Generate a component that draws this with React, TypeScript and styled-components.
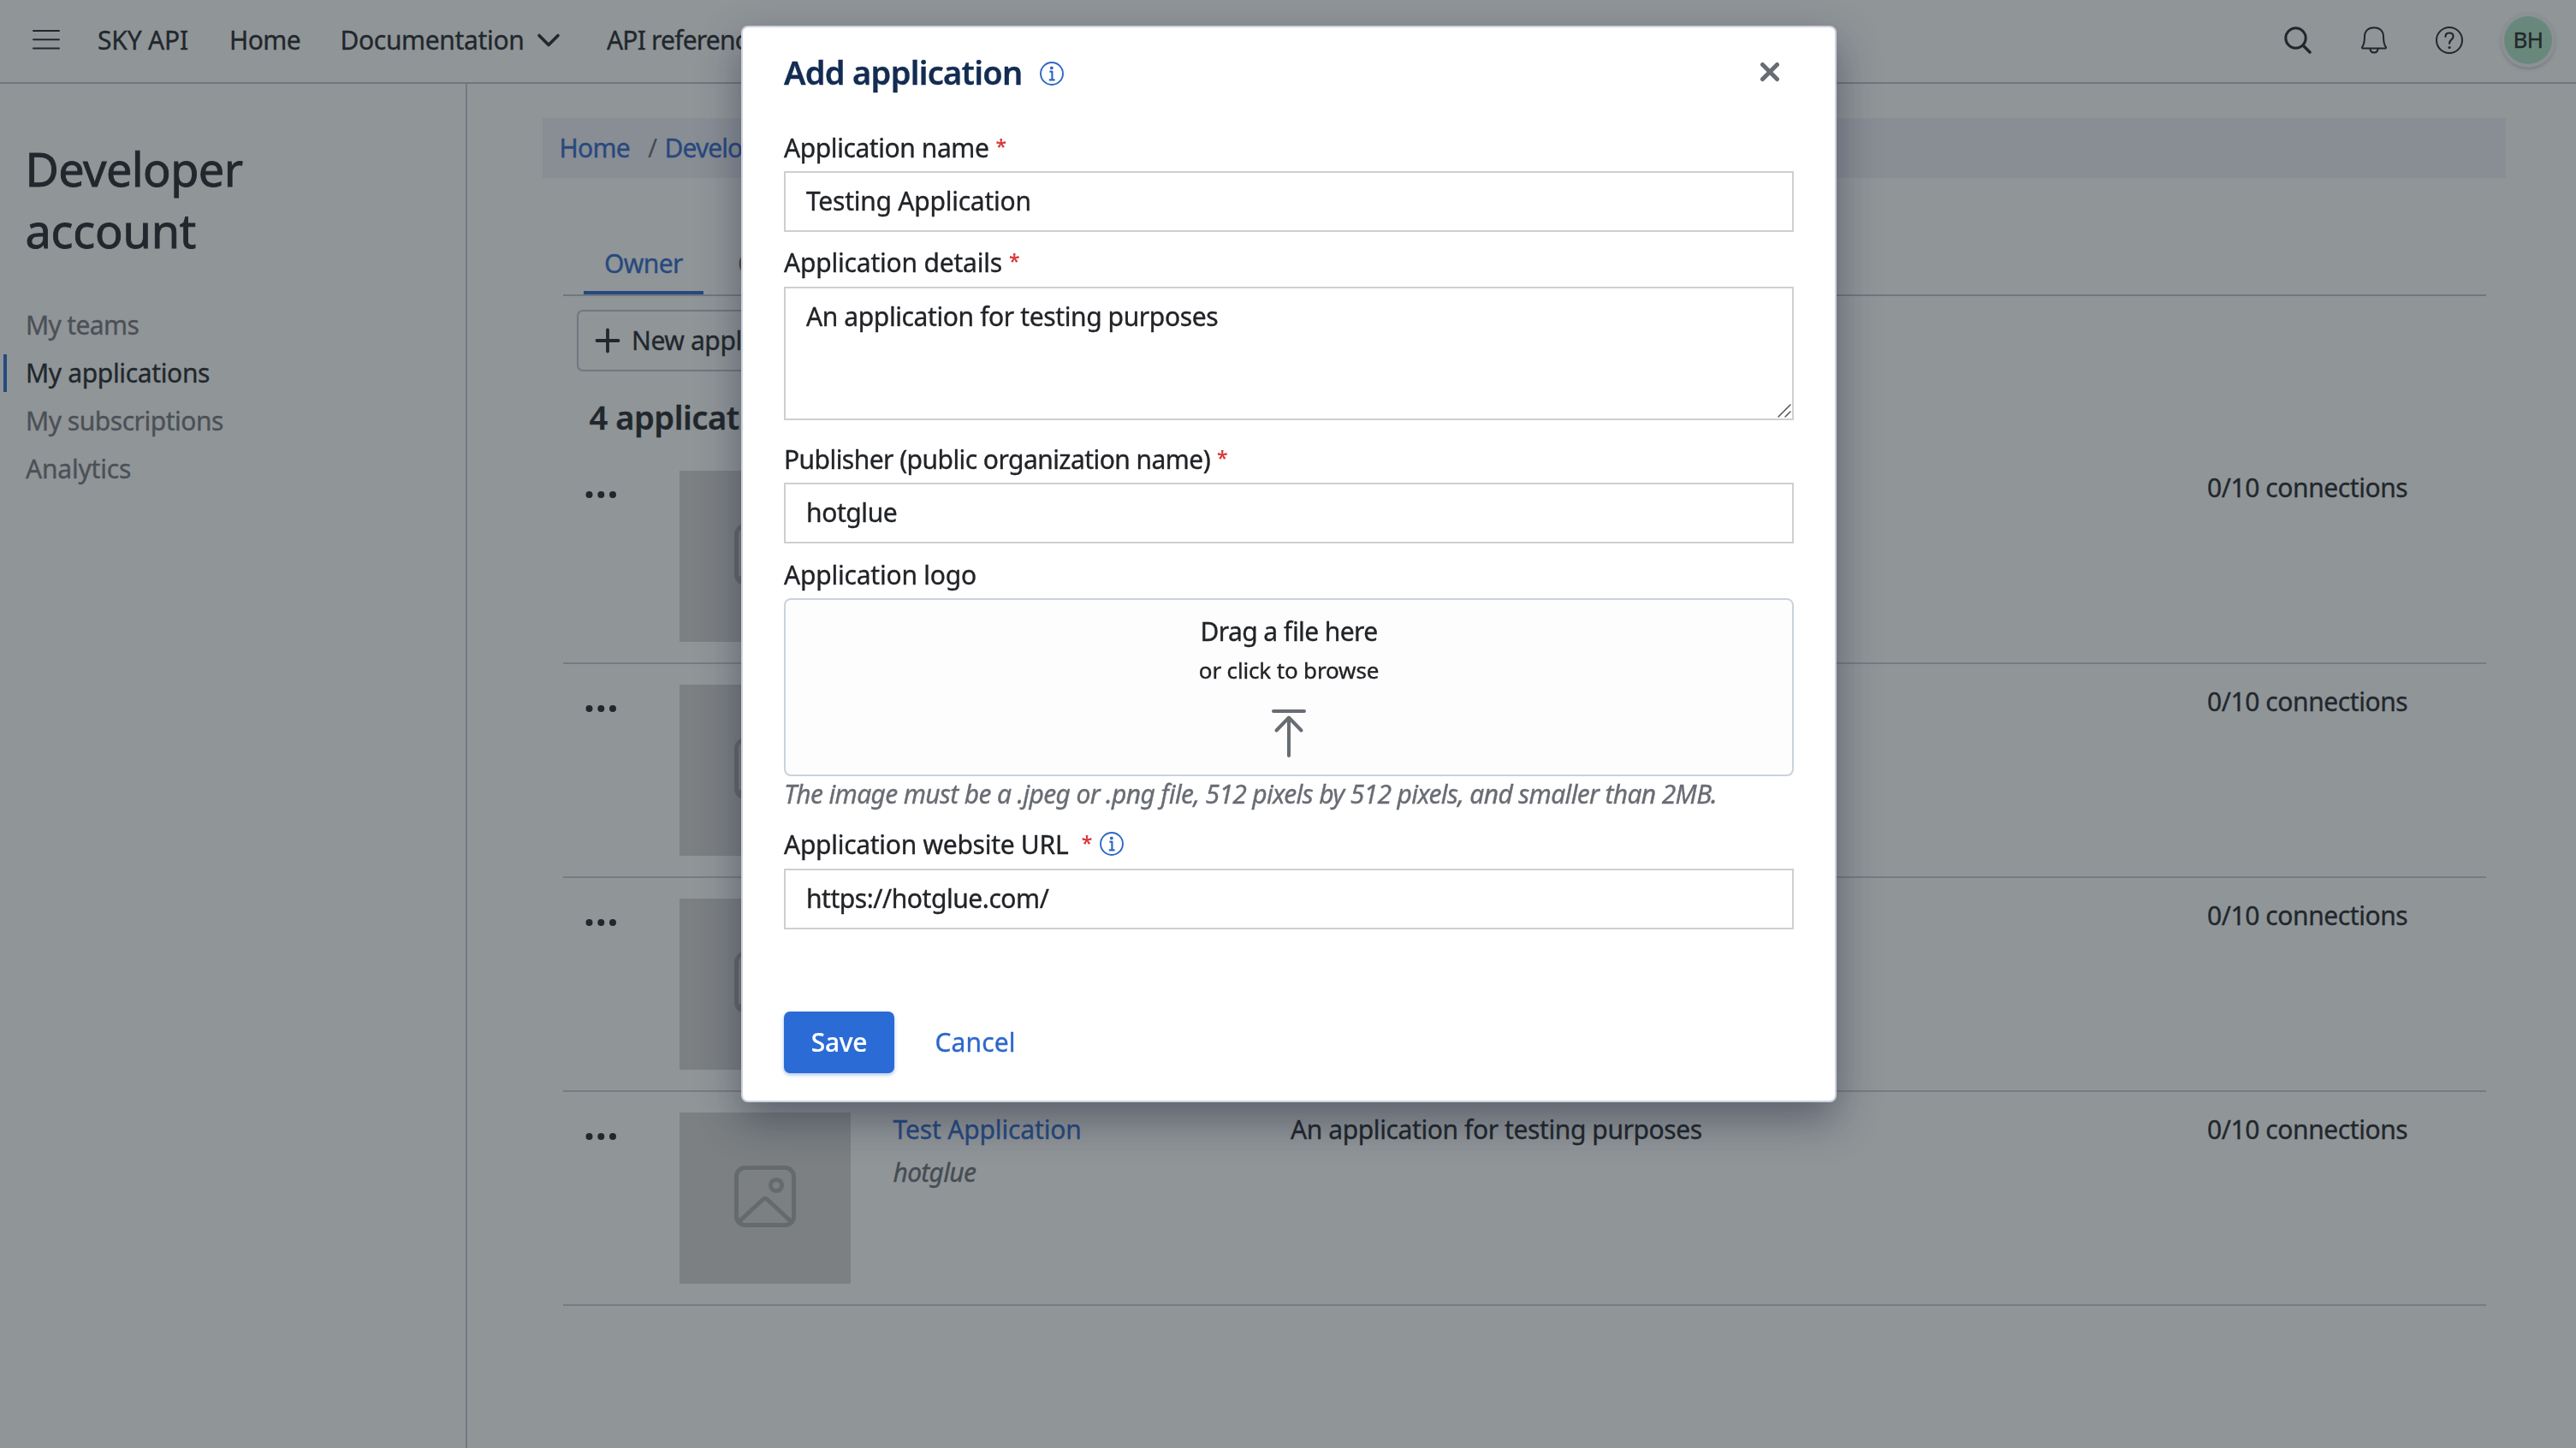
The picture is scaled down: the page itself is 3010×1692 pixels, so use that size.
import React from "react";
import styled, { createGlobalStyle } from "styled-components";

const INK = "#212327";
const MUTED = "#686c73";
const LINK = "#2d67cb";
const RULE = "#cdcfd2";

const GlobalStyle = createGlobalStyle`
  * { box-sizing: border-box; }
  body {
    margin: 0;
    background: #fff;
    color: ${INK};
    font: 400 30px/44px "Noto Sans", "Open Sans", sans-serif;
    font-feature-settings: "liga" 1;
    overflow: hidden;
  }
  svg { display: block; flex: none; fill: none; stroke: currentColor; stroke-linecap: round; stroke-linejoin: round; }
`;

/* Letter spacing of a run of text, in pixels, and how much its strokes are thickened */
const T = styled.span<{ $ls?: number; $bolder?: number }>`
  letter-spacing: ${(p) => p.$ls ?? -0.35}px;
  white-space: nowrap;
  -webkit-text-stroke: ${(p) => p.$bolder ?? 0.35}px currentColor;
`;

/* ---------- Page shell ---------- */
const Page = styled.div`
  width: 3010px;
  height: 1692px;
  display: flex;
  flex-direction: column;
`;

const TopBar = styled.header`
  height: 98px;
  flex: none;
  display: flex;
  align-items: center;
  padding: 0 28px 2px 38px;
  border-bottom: 2px solid #bec1cb;
`;

const MainNav = styled.nav`
  display: grid;
  grid-template-columns: 154px 129.5px 229.5px 82px auto;
  align-items: center;
  margin-left: 44px;
`;

const Tools = styled.div`
  margin-left: auto;
  display: flex;
  align-items: center;
`;

const Tool = styled.div<{ $gap: number }>`
  margin-right: ${(p) => p.$gap}px;
`;

const Avatar = styled.div`
  width: 56px;
  height: 56px;
  border-radius: 50%;
  background: #b0e4c7;
  box-shadow: 0 0 0 4px #f7f5f8, 0 2px 5px 3px rgba(60, 50, 80, 0.35);
  display: flex;
  align-items: center;
  justify-content: center;
  font-size: 26px;
  line-height: 54px;
  padding-bottom: 2px;
`;

const Body = styled.div`
  flex: 1;
  display: flex;
`;

const Sidebar = styled.aside`
  width: 546px;
  border-right: 2px solid #c6c9d4;
  padding-top: 62.6px;
`;

const SideTitle = styled.h1`
  margin: 0 0 46.6px 29.5px;
  font-size: 54px;
  line-height: 72px;
  font-weight: 400;
`;

const SideLink = styled.a<{ $active?: boolean }>`
  display: flex;
  align-items: center;
  height: 56.2px;
  gap: 22px;
  padding-top: 1px;
  color: ${(p) => (p.$active ? INK : "#74757a")};
  &::before {
    content: "";
    width: 4px;
    height: 44px;
    margin: 0 0 0 4px;
    background: ${(p) => (p.$active ? LINK : "transparent")};
  }
`;

const Main = styled.main`
  flex: 1;
  padding: 40px 82px 0 88px;
`;

const Crumbs = styled.div`
  height: 70px;
  background: #f1eff6;
  display: grid;
  grid-template-columns: 103.5px 19.5px auto;
  align-items: center;
  padding: 0 0 0 19.5px;
  color: ${LINK};
`;

const Slash = styled.span`
  color: ${MUTED};
`;

const Content = styled.section`
  margin: 66px 23px 0 24px;
`;

const Tabs = styled.div`
  display: flex;
  gap: 16px;
  height: 72px;
  padding-left: 24px;
  border-bottom: 2px solid #c0c3cd;
`;

const Tab = styled.div<{ $active?: boolean }>`
  height: 70px;
  padding: 0 24px;
  line-height: 68px;
  color: ${(p) => (p.$active ? LINK : MUTED)};
  border-bottom: 4px solid ${(p) => (p.$active ? LINK : "transparent")};
`;

const NewButton = styled.div`
  display: flex;
  align-items: center;
  gap: 13px;
  width: 300px;
  height: 72px;
  margin: 16px 0 0 16px;
  padding: 0 0 0 19px;
  border: 2px solid #c0c3cd;
  border-radius: 7px;
`;

const ListTitle = styled.h2`
  margin: 29px 0 15px 30.5px;
  font-size: 38px;
  line-height: 48px;
  font-weight: 600;
`;

const Row = styled.div`
  display: grid;
  grid-template-columns: 136px 249.5px 464.5px 1071px auto;
  height: 250px;
  border-bottom: 2px solid #cccdd2;
  line-height: 50px;
`;

const More = styled.div`
  padding: 47px 0 0 25.5px;
  svg { fill: currentColor; stroke: none; }
`;

const Thumb = styled.div`
  width: 200px;
  height: 200px;
  margin-top: 24px;
  background: #d6d4d3;
  color: #a9a8a8;
  display: flex;
  align-items: center;
  justify-content: center;
  padding-bottom: 4px;
`;

const Cell = styled.div`
  display: flex;
  flex-direction: column;
  padding-top: 19px;
`;

const AppLink = styled.a`
  color: ${LINK};
`;

const Org = styled.em`
  color: ${MUTED};
`;

/* ---------- Modal ---------- */
const Overlay = styled.div`
  position: fixed;
  inset: 0;
  background: rgba(33, 43, 49, 0.5);
  display: flex;
  align-items: flex-start;
  justify-content: center;
  padding: 30px 0 0 2px;
`;

const Dialog = styled.div`
  width: 1280px;
  height: 1258px;
  background: #fff;
  border: 2px solid #cdd2dc;
  border-radius: 8px;
  box-shadow: 0 20px 50px rgba(20, 28, 52, 0.43);
  padding: 25.5px 48px 0;
`;

const DialogHead = styled.div`
  display: flex;
  align-items: center;
  height: 52px;
  margin-bottom: 40px;
`;

const DialogTitle = styled.h2`
  margin: 0 20px 0 0;
  font-size: 38px;
  line-height: 52px;
  font-weight: 600;
  color: #132c52;
`;

const Info = styled.span`
  color: #2f68c4;
  margin-top: 5px;
`;

const Close = styled.span`
  margin: 0 16px 0 auto;
  color: ${MUTED};
`;

const Field = styled.div<{ $after: number }>`
  margin-bottom: ${(p) => p.$after}px;
`;

const Label = styled.div`
  display: flex;
  height: 50.6px;
  line-height: 45px;
`;

const Star = styled.span<{ $gap?: number }>`
  margin-left: ${(p) => p.$gap ?? 8}px;
  font-size: 23px;
  line-height: 42px;
  font-weight: 600;
  color: #d93a3d;
`;

const LabelInfo = styled.span`
  color: #2f68c4;
  margin: 8px 0 0 9px;
`;

const Input = styled.div<{ $h?: number }>`
  position: relative;
  height: ${(p) => p.$h ?? 70.7}px;
  border: 2px solid ${RULE};
  padding-left: 24px;
  line-height: 66.6px;
`;

const Grip = styled.span`
  position: absolute;
  right: 1px;
  bottom: 1px;
  color: #55585c;
`;

const Drop = styled.div`
  height: 207.7px;
  border: 2px solid #cbd2da;
  border-radius: 8px;
  background: #fdfdfd;
  display: flex;
  flex-direction: column;
  align-items: center;
  padding-top: 16.4px;
  line-height: 40px;
`;

const DropHint = styled.div`
  font-size: 26px;
  margin: 5px 0 25.4px;
`;

const DropIcon = styled.span`
  color: ${MUTED};
`;

const Help = styled.div`
  font-style: italic;
  line-height: 41px;
  height: 40px;
  color: ${MUTED};
`;

const Actions = styled.div`
  display: flex;
  align-items: center;
`;

const Save = styled.div`
  width: 129px;
  height: 72px;
  border-radius: 7px;
  background: #2a6bd6;
  box-shadow: 0 2px 4px rgba(43, 107, 214, 0.4);
  color: #fff;
  font-weight: 500;
  line-height: 72px;
  text-align: center;
`;

const Cancel = styled.div`
  margin-left: 47.5px;
  color: ${LINK};
  line-height: 72px;
`;

/* ---------- Icons ---------- */
const InfoIcon = () => (
  <svg width="28" height="28" viewBox="0 0 28 28" strokeWidth="1.9">
    <circle cx="14" cy="14" r="13" />
    <circle cx="13.8" cy="7.4" r="1.9" fill="currentColor" stroke="none" />
    <path d="M11.4 11.6h3v9.6M10.8 21.4h6.8" strokeWidth="2.2" strokeLinecap="butt" />
  </svg>
);

const PictureIcon = () => (
  <svg width="72" height="72" viewBox="0 0 72 72" strokeWidth="5">
    <rect x="2.5" y="2.5" width="67" height="67" rx="10" />
    <circle cx="49" cy="23" r="6.6" />
    <path d="M5 66 33.5 39.5Q36 37 38.5 39.5L67 66" />
  </svg>
);

const DotsIcon = () => (
  <svg width="36" height="10" viewBox="0 0 36 10">
    <circle cx="4.5" cy="5" r="4" />
    <circle cx="18.3" cy="5" r="4" />
    <circle cx="32" cy="5" r="4" />
  </svg>
);

type AppRow = { name?: string; org?: string; details?: string; usage: string };
const rows: AppRow[] = [
  { usage: "0/10 connections" },
  { usage: "0/10 connections" },
  { usage: "0/10 connections" },
  { name: "Test Application", org: "hotglue", details: "An application for testing purposes", usage: "0/10 connections" },
];

export default function App() {
  return (
    <>
      <GlobalStyle />
      <Page>
        <TopBar>
          <svg width="32" height="24" viewBox="0 0 32 24" strokeWidth="2">
            <path d="M1 1h30M1 11.3h30M1 21.6h30" />
          </svg>
          <MainNav>
            <T $ls={-0.2}>SKY API</T>
            <T $ls={-0.6}>Home</T>
            <T>Documentation</T>
            <svg width="28" height="18" viewBox="0 0 28 18" strokeWidth="3.6">
              <path d="M3 3.5 14 14.5 25 3.5" />
            </svg>
            <T $ls={-0.8}>API reference</T>
          </MainNav>
          <Tools>
            <Tool $gap={58}>
              <svg width="32" height="32" viewBox="0 0 32 32" strokeWidth="3">
                <circle cx="13.5" cy="13.5" r="11.7" />
                <path d="M22 22 30 30" strokeWidth="3.4" />
              </svg>
            </Tool>
            <Tool $gap={57}>
              <svg width="30" height="32" viewBox="0 0 30 32" strokeWidth="2">
                <path d="M15 1.2c-7 0-11 4.4-11 10.4 0 6.4-.3 9-2.6 12-.8 1.2-.3 2 .8 2h25.6c1.1 0 1.6-.8.8-2-2.3-3-2.6-5.6-2.6-12 0-6-4-10.4-11-10.4z" />
                <path d="M10.4 26c.4 3 2.2 4.400 4.600 4.400s4.200-1.400 4.600-4.400" />
              </svg>
            </Tool>
            <Tool $gap={48}>
              <svg width="32" height="32" viewBox="0 0 32 32" strokeWidth="2">
                <circle cx="16" cy="16" r="15" />
                <path d="M11.5 11.8c0-2.6 1.9-4.3 4.6-4.3s4.5 1.7 4.5 4.1c0 3.7-4.5 4-4.5 7.9v.3" strokeWidth="2.2" />
                <circle cx="16.1" cy="24.5" r="1.6" fill="currentColor" stroke="none" />
              </svg>
            </Tool>
            <Avatar><T $ls={-0.6}>BH</T></Avatar>
          </Tools>
        </TopBar>

        <Body>
          <Sidebar>
            <SideTitle>
              <T $ls={-0.6} $bolder={0.9}>Developer</T>
              <br />
              <T $ls={-0.2} $bolder={0.9}>account</T>
            </SideTitle>
            <SideLink><T $ls={-0.65}>My teams</T></SideLink>
            <SideLink $active><T>My applications</T></SideLink>
            <SideLink><T $ls={-0.48}>My subscriptions</T></SideLink>
            <SideLink><T $ls={-0.2}>Analytics</T></SideLink>
          </Sidebar>

          <Main>
            <Crumbs>
              <T $ls={-0.7}>Home</T>
              <Slash>/</Slash>
              <T $ls={-0.9}>Developer account</T>
            </Crumbs>
            <Content>
              <Tabs>
                <Tab $active><T $ls={-0.6}>Owner</T></Tab>
                <Tab><T>Collaborator</T></Tab>
              </Tabs>
              <NewButton>
                <svg width="30" height="30" viewBox="0 0 30 30" strokeWidth="3.8">
                  <path d="M15 2.5v25M2.5 15h25" />
                </svg>
                <T $ls={-0.4}>New application</T>
              </NewButton>
              <ListTitle><T $ls={-0.45}>4 applications</T></ListTitle>
              {rows.map((row, i) => (
                <Row key={i}>
                  <More><DotsIcon /></More>
                  <Thumb><PictureIcon /></Thumb>
                  <Cell>
                    {row.name && <AppLink><T $ls={-0.15}>{row.name}</T></AppLink>}
                    {row.org && <Org><T $ls={-0.7}>{row.org}</T></Org>}
                  </Cell>
                  <Cell>{row.details && <T $ls={-0.4}>{row.details}</T>}</Cell>
                  <Cell><T $ls={-0.42}>{row.usage}</T></Cell>
                </Row>
              ))}
            </Content>
          </Main>
        </Body>
      </Page>

      <Overlay>
        <Dialog>
          <DialogHead>
            <DialogTitle><T $ls={-0.73}>Add application</T></DialogTitle>
            <Info><InfoIcon /></Info>
            <Close>
              <svg width="24" height="24" viewBox="0 0 24 24" strokeWidth="5">
                <path d="M3.5 3.5 20.5 20.5M20.5 3.5 3.5 20.5" />
              </svg>
            </Close>
          </DialogHead>

          <Field $after={13.5}>
            <Label><T $ls={-0.42}>Application name</T><Star>*</Star></Label>
            <Input><T $ls={-0.24}>Testing Application</T></Input>
          </Field>
          <Field $after={22.7}>
            <Label><T $ls={-0.2}>Application details</T><Star>*</Star></Label>
            <Input $h={156}>
              <T $ls={-0.39}>An application for testing purposes</T>
              <Grip>
                <svg width="16" height="16" viewBox="0 0 16 16" strokeWidth="1.5">
                  <path d="M1 15 15 1M9 15l6-6" />
                </svg>
              </Grip>
            </Input>
          </Field>
          <Field $after={13.7}>
            <Label><T $ls={-0.55}>Publisher (public organization name)</T><Star>*</Star></Label>
            <Input><T $ls={-0.4}>hotglue</T></Input>
          </Field>
          <Field $after={17.6}>
            <Label><T $ls={-0.21}>Application logo</T></Label>
            <Drop>
              <T $ls={-0.6}>Drag a file here</T>
              <DropHint><T $ls={-0.15}>or click to browse</T></DropHint>
              <DropIcon>
                <svg width="42" height="58" viewBox="0 0 42 58" strokeWidth="4">
                  <path d="M3 3h36M21 11v44M6.5 25.5 21 10.5 35.5 25.5" />
                </svg>
              </DropIcon>
            </Drop>
            <Help>
              <T $ls={-0.66}>The image must be a .jpeg or .png file, 512 pixels by 512 pixels, and smaller than 2MB.</T>
            </Help>
          </Field>
          <Field $after={96.3}>
            <Label>
              <T $ls={-0.28}>Application website URL</T>
              <Star $gap={15.5}>*</Star>
              <LabelInfo><InfoIcon /></LabelInfo>
            </Label>
            <Input><T $ls={-0.45}>https://hotglue.com/</T></Input>
          </Field>

          <Actions>
            <Save><T $ls={-0.3} $bolder={0.2}>Save</T></Save>
            <Cancel><T $ls={0.1}>Cancel</T></Cancel>
          </Actions>
        </Dialog>
      </Overlay>
    </>
  );
}
